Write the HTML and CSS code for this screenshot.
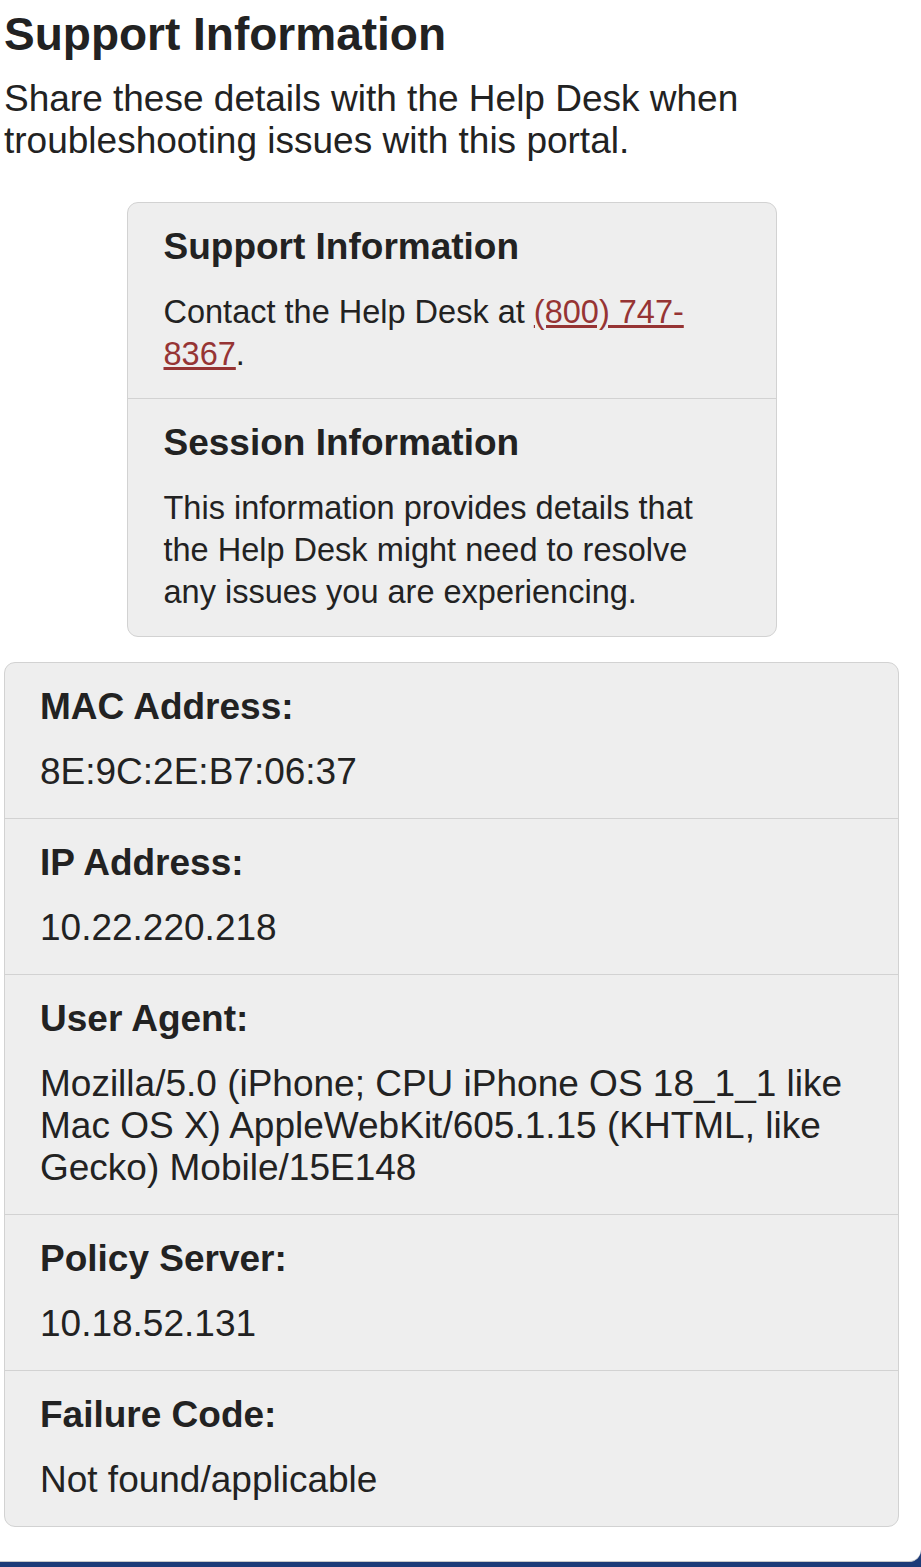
FILE: index.html
```html
<!DOCTYPE html>
<html lang="en">
<head>
    <meta charset="UTF-8">
    <meta name="viewport" content="width=device-width, initial-scale=1.0">
    <title>Support Information</title>
    <link rel="stylesheet" href="styles.css">
</head>
<body>
    <div class="page">
        <h1>Support Information</h1>
        <p class="intro">Share these details with the Help Desk when troubleshooting issues with this portal.</p>

        <div class="panel panel-narrow">
            <section class="panel-row">
                <h2>Support Information</h2>
                <p>Contact the Help Desk at <a href="tel:8007478367">(800) 747-8367</a>.</p>
            </section>
            <section class="panel-row">
                <h2>Session Information</h2>
                <p>This information provides details that the Help Desk might need to resolve any issues you are experiencing.</p>
            </section>
        </div>

        <dl class="panel details">
            <div class="panel-row">
                <dt>MAC Address:</dt>
                <dd>8E:9C:2E:B7:06:37</dd>
            </div>
            <div class="panel-row">
                <dt>IP Address:</dt>
                <dd>10.22.220.218</dd>
            </div>
            <div class="panel-row">
                <dt>User Agent:</dt>
                <dd>Mozilla/5.0 (iPhone; CPU iPhone OS 18_1_1 like Mac OS X) AppleWebKit/605.1.15 (KHTML, like Gecko) Mobile/15E148</dd>
            </div>
            <div class="panel-row">
                <dt>Policy Server:</dt>
                <dd>10.18.52.131</dd>
            </div>
            <div class="panel-row">
                <dt>Failure Code:</dt>
                <dd>Not found/applicable</dd>
            </div>
        </dl>
    </div>
</body>
</html>
```

FILE: styles.css
```css
body {
    font-family: "Liberation Sans", Arial, sans-serif;
    margin: 0;
    padding: 0;
    color: #222;
    background-color: #1d3b78;
}
.page {
    background: white;
    padding: 8px 22px 36px 4px;
    border-bottom: 1px solid #c8c8c8;
    border-bottom-right-radius: 12px;
    min-height: 1517px;
    box-sizing: border-box;
    height: 1562px;
}
h1 {
    font-size: 46px;
    line-height: 52px;
    margin: 0;
    font-weight: bold;
}
.intro {
    font-size: 37px;
    line-height: 42px;
    margin: 18px 0 0;
}
.panel {
    background-color: #eeeeee;
    border: 1px solid #d2d2d2;
    border-radius: 11px;
}
.panel-narrow {
    width: 650px;
    box-sizing: border-box;
    margin: 40px auto 0;
}
.panel-row {
    padding: 22px 36px 24px;
    border-top: 1px solid #d2d2d2;
}
.panel-row:first-child {
    border-top: none;
}
.panel-narrow .panel-row {
    padding-bottom: 23px;
}
h2, dt {
    font-size: 37px;
    line-height: 44px;
    font-weight: bold;
    margin: 0;
}
.panel-narrow p {
    font-size: 32.5px;
    line-height: 42px;
    margin: 22px 0 0;
}
.panel-narrow a {
    color: #963434;
}
.details {
    margin: 25px 0 0;
}
.details .panel-row {
    padding-left: 35px;
    padding-bottom: 25px;
}
dd {
    font-size: 37px;
    line-height: 42px;
    margin: 22px 0 0;
}
```
